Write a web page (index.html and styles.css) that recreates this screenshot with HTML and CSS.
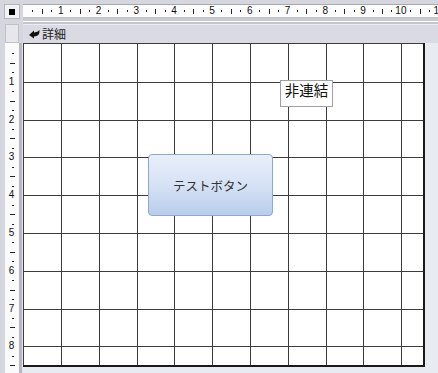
FILE: index.html
```html
<!DOCTYPE html>
<html lang="ja">
<head>
<meta charset="utf-8">
<title>フォーム デザイン</title>
<link rel="stylesheet" href="styles.css">
</head>
<body>
<div class="app">
  <div class="corner"><div class="corner-box"><span class="sel"></span></div></div>
  <div class="hruler-area">
    <div class="hruler">
      <div class="seg"><span class="cell"><i class="dot"></i></span><span class="cell"><i class="tick"></i></span><span class="cell"><i class="dot"></i></span><span class="cell"><b class="num">1</b></span></div>
      <div class="seg"><span class="cell"><i class="dot"></i></span><span class="cell"><i class="tick"></i></span><span class="cell"><i class="dot"></i></span><span class="cell"><b class="num">2</b></span></div>
      <div class="seg"><span class="cell"><i class="dot"></i></span><span class="cell"><i class="tick"></i></span><span class="cell"><i class="dot"></i></span><span class="cell"><b class="num">3</b></span></div>
      <div class="seg"><span class="cell"><i class="dot"></i></span><span class="cell"><i class="tick"></i></span><span class="cell"><i class="dot"></i></span><span class="cell"><b class="num">4</b></span></div>
      <div class="seg"><span class="cell"><i class="dot"></i></span><span class="cell"><i class="tick"></i></span><span class="cell"><i class="dot"></i></span><span class="cell"><b class="num">5</b></span></div>
      <div class="seg"><span class="cell"><i class="dot"></i></span><span class="cell"><i class="tick"></i></span><span class="cell"><i class="dot"></i></span><span class="cell"><b class="num">6</b></span></div>
      <div class="seg"><span class="cell"><i class="dot"></i></span><span class="cell"><i class="tick"></i></span><span class="cell"><i class="dot"></i></span><span class="cell"><b class="num">7</b></span></div>
      <div class="seg"><span class="cell"><i class="dot"></i></span><span class="cell"><i class="tick"></i></span><span class="cell"><i class="dot"></i></span><span class="cell"><b class="num">8</b></span></div>
      <div class="seg"><span class="cell"><i class="dot"></i></span><span class="cell"><i class="tick"></i></span><span class="cell"><i class="dot"></i></span><span class="cell"><b class="num">9</b></span></div>
      <div class="seg"><span class="cell"><i class="dot"></i></span><span class="cell"><i class="tick"></i></span><span class="cell"><i class="dot"></i></span><span class="cell"><b class="num">10</b></span></div>
      <div class="seg"><span class="cell"><i class="dot"></i></span><span class="cell"><i class="tick"></i></span><span class="cell"><i class="dot"></i></span><span class="cell"><b class="num">11</b></span></div>
    </div>
  </div>

  <div class="side-head"><div class="side-head-box"></div></div>
  <div class="section-bar">
    <svg class="sec-icon" width="11" height="9" viewBox="0 0 11 9"><path d="M0 5 L5 0.5 L5 2.5 Q9 2 10.5 0 Q11 6.5 5 6.5 L5 8.5 Z" fill="#111"/></svg>
    <span class="sec-title">詳細</span>
  </div>

  <div class="side">
    <div class="vruler">
      <div class="vseg"><span class="vcell"><i class="vdot"></i></span><span class="vcell"><i class="vtick"></i></span><span class="vcell"><i class="vdot"></i></span><span class="vcell"><b class="vnum">1</b></span></div>
      <div class="vseg"><span class="vcell"><i class="vdot"></i></span><span class="vcell"><i class="vtick"></i></span><span class="vcell"><i class="vdot"></i></span><span class="vcell"><b class="vnum">2</b></span></div>
      <div class="vseg"><span class="vcell"><i class="vdot"></i></span><span class="vcell"><i class="vtick"></i></span><span class="vcell"><i class="vdot"></i></span><span class="vcell"><b class="vnum">3</b></span></div>
      <div class="vseg"><span class="vcell"><i class="vdot"></i></span><span class="vcell"><i class="vtick"></i></span><span class="vcell"><i class="vdot"></i></span><span class="vcell"><b class="vnum">4</b></span></div>
      <div class="vseg"><span class="vcell"><i class="vdot"></i></span><span class="vcell"><i class="vtick"></i></span><span class="vcell"><i class="vdot"></i></span><span class="vcell"><b class="vnum">5</b></span></div>
      <div class="vseg"><span class="vcell"><i class="vdot"></i></span><span class="vcell"><i class="vtick"></i></span><span class="vcell"><i class="vdot"></i></span><span class="vcell"><b class="vnum">6</b></span></div>
      <div class="vseg"><span class="vcell"><i class="vdot"></i></span><span class="vcell"><i class="vtick"></i></span><span class="vcell"><i class="vdot"></i></span><span class="vcell"><b class="vnum">7</b></span></div>
      <div class="vseg"><span class="vcell"><i class="vdot"></i></span><span class="vcell"><i class="vtick"></i></span><span class="vcell"><i class="vdot"></i></span><span class="vcell"><b class="vnum">8</b></span></div>
      <div class="vseg"><span class="vcell"><i class="vdot"></i></span><span class="vcell"><i class="vtick"></i></span><span class="vcell"><i class="vdot"></i></span><span class="vcell"></span></div>
    </div>
    <div class="side-bar"></div>
  </div>

  <div class="canvas">
    <div class="form">
      <svg class="grid" width="403" height="325" viewBox="0 0 403 325">
        <rect x="0" y="0" width="402" height="324" fill="#fff"/>
        <g stroke="#3c3c3c" stroke-width="1">
          <line x1="0.5" y1="0" x2="0.5" y2="324"/>
          <line x1="38.5" y1="0" x2="38.5" y2="324"/>
          <line x1="76.5" y1="0" x2="76.5" y2="324"/>
          <line x1="114.5" y1="0" x2="114.5" y2="324"/>
          <line x1="151.5" y1="0" x2="151.5" y2="324"/>
          <line x1="189.5" y1="0" x2="189.5" y2="324"/>
          <line x1="227.5" y1="0" x2="227.5" y2="324"/>
          <line x1="265.5" y1="0" x2="265.5" y2="324"/>
          <line x1="303.5" y1="0" x2="303.5" y2="324"/>
          <line x1="340.5" y1="0" x2="340.5" y2="324"/>
          <line x1="378.5" y1="0" x2="378.5" y2="324"/>
          <line x1="0" y1="0.5" x2="402" y2="0.5"/>
          <line x1="0" y1="39.5" x2="402" y2="39.5"/>
          <line x1="0" y1="77.5" x2="402" y2="77.5"/>
          <line x1="0" y1="114.5" x2="402" y2="114.5"/>
          <line x1="0" y1="152.5" x2="402" y2="152.5"/>
          <line x1="0" y1="190.5" x2="402" y2="190.5"/>
          <line x1="0" y1="228.5" x2="402" y2="228.5"/>
          <line x1="0" y1="266.5" x2="402" y2="266.5"/>
          <line x1="0" y1="303.5" x2="402" y2="303.5"/>
        </g>
        <g fill="#1a1a1a">
          <rect x="400" y="0" width="2" height="324"/>
          <rect x="0" y="322" width="402" height="2"/>
        </g>
      </svg>
      <div class="label">非連結</div>
      <div class="button">テストボタン</div>
    </div>
  </div>
</div>
</body>
</html>
```

FILE: styles.css
```css
* { box-sizing: border-box; }
html, body { margin: 0; padding: 0; }
body {
  width: 438px;
  height: 373px;
  overflow: hidden;
  font-family: "Noto Sans CJK JP", "Noto Sans", sans-serif;
}
.app {
  display: grid;
  grid-template-columns: 23px 415px;
  grid-template-rows: 24px 19px 330px;
  width: 438px;
  height: 373px;
  background: #d6d6de;
  overflow: hidden;
}

/* corner */
.corner {
  padding: 4px 3px 5px 4px;
}
.corner-box {
  width: 16px;
  height: 15px;
  background: #f2f2f4;
  border: 1px solid #b4b4bc;
  display: flex;
  align-items: center;
  justify-content: center;
}
.sel {
  width: 6px;
  height: 6px;
  background: #000;
}

/* horizontal ruler */
.hruler-area {
  padding-top: 4px;
  overflow: hidden;
  border-bottom: 2px solid #c4c4cc;
}
.hruler {
  display: flex;
  height: 14px;
  background: #fcfcfc;
  border-top: 1px solid #a8a8b0;
  border-bottom: 1px solid #c0c0c8;
  overflow: hidden;
  box-shadow: 0 3px 0 #c8c8d0, 0 4px 0 #fff;
}
.seg {
  display: flex;
  flex: 0 0 37.8px;
  height: 100%;
}
.cell {
  flex: 0 0 9.45px;
  display: flex;
  justify-content: flex-end;
  align-items: center;
}
.dot {
  display: block;
  width: 1px;
  height: 2px;
  background: #222;
  margin-right: -1px;
}
.tick {
  display: block;
  width: 1px;
  height: 5px;
  background: #222;
  margin-right: -1px;
}
.num {
  display: block;
  flex: 0 0 14px;
  margin-right: -7px;
  text-align: center;
  font-family: "Liberation Sans", Arial, sans-serif;
  font-weight: normal;
  font-size: 10px;
  line-height: 10px;
  color: #111;
}

/* section header row */
.side-head {
  padding: 0 4px 0 5px;
  background: #d6d6de;
}
.side-head-box {
  height: 19px;
  background: #e6e6ec;
  border: 1px solid #c0c0c8;
}
.section-bar {
  display: flex;
  align-items: center;
  gap: 2px;
  padding-left: 6px;
  background: #dadae4;
  border-top: 1px solid #ececf2;
}
.sec-icon { display: block; margin-top: 1px; }
.sec-title {
  font-size: 12px;
  line-height: 14px;
  color: #222;
}

/* left column with vertical ruler */
.side {
  display: flex;
  padding-left: 5px;
  background: #d6d6de;
}
.vruler {
  width: 14px;
  background: #fafafa;
  overflow: hidden;
  display: flex;
  flex-direction: column;
  padding-top: 1px;
}
.vseg {
  display: flex;
  flex-direction: column;
  flex: 0 0 37.8px;
}
.vcell {
  flex: 0 0 9.45px;
  display: flex;
  flex-direction: column;
  justify-content: flex-end;
  align-items: center;
}
.vdot {
  display: block;
  width: 2px;
  height: 1px;
  background: #222;
  margin-bottom: -1px;
  margin-left: 1px;
}
.vtick {
  display: block;
  width: 5px;
  height: 1px;
  background: #222;
  margin-bottom: -1px;
  margin-left: 1px;
}
.vnum {
  display: block;
  flex: 0 0 10px;
  margin-bottom: -5px;
  font-family: "Liberation Sans", Arial, sans-serif;
  font-weight: normal;
  font-size: 10px;
  line-height: 10px;
  color: #111;
  margin-right: 1px;
}
.side-bar {
  width: 4px;
  background: #b8b8c2;
  border-right: 1px solid #e4e4ea;
}

/* design canvas */
.canvas {
  display: flex;
  align-items: flex-start;
  background: #e8ebf2;
}
.form {
  position: relative;
  flex: 0 0 403px;
  height: 325px;
}
.grid { display: block; }
.label {
  position: absolute;
  left: 257px;
  top: 37px;
  width: 53px;
  height: 27px;
  background: #fff;
  border: 1px solid #a0a0a0;
  font-size: 14.5px;
  line-height: 18px;
  text-align: center;
  color: #111;
}
.button {
  position: absolute;
  left: 125px;
  top: 111px;
  width: 125px;
  height: 62px;
  border: 1px solid #8ea7cf;
  border-radius: 4px;
  background: linear-gradient(to bottom, #e9effa 0%, #d6e2f5 50%, #b9cdec 100%);
  display: flex;
  align-items: center;
  justify-content: center;
  font-size: 12.5px;
  color: #333;
}
```
